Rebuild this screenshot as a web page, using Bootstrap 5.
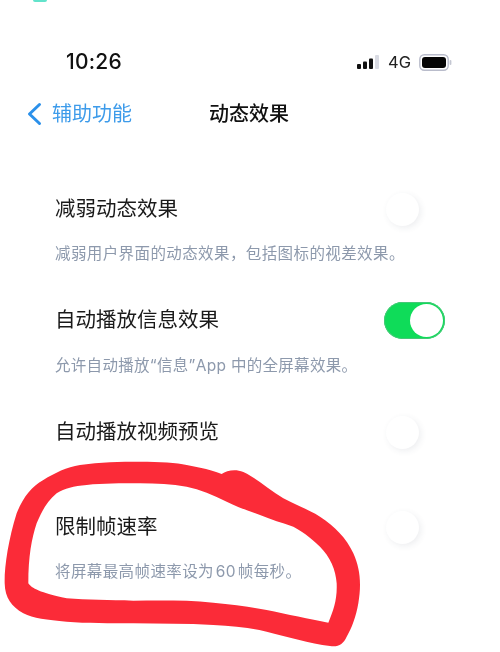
<!DOCTYPE html>
<html lang="zh">
<head>
<meta charset="utf-8">
<title>动态效果</title>
<link rel="stylesheet" href="https://cdn.jsdelivr.net/npm/bootstrap@5.3.0/dist/css/bootstrap.min.css">
<style>
html,body{height:652px;overflow:hidden;background:#fff}
body{font-family:"Inter","Noto Sans CJK SC",sans-serif;color:#111}
.phone{position:relative;width:500px;height:652px;overflow:hidden;filter:blur(.45px)}
.topdot{width:14px;height:2px;margin-left:33px;background:#62e3cb;border-radius:0 0 7px 7px}
.statusbar{height:30px;margin-top:45px;padding:0 48px 0 66px}
.clock{font-size:21px;font-weight:500;line-height:30px;letter-spacing:.2px}
.net{font-size:16.5px;line-height:20px;color:#222}
.navrow{height:40px;margin-top:17px;padding-left:26px}
.backtxt{color:#3d9bea;font-size:20px;line-height:1;margin-left:10px;width:81px;white-space:nowrap}
.navtitle{font-size:20px;font-weight:500;margin-left:76px;line-height:1;white-space:nowrap}
.setlist{padding:0 55px;margin-top:55px}
.setrow{height:40px}
.settitle{font-size:20.5px;line-height:1;color:#1a1a1a}
.setnote{font-size:15.5px;line-height:20px;color:#8d99ac;margin-top:15px;white-space:nowrap;letter-spacing:.4px}
.gap-a{margin-top:36px}
.setnote-b{margin-top:16px;letter-spacing:.3px}
.gap-b{margin-top:36px}
.gap-d{margin-top:55px}
.swit{width:61px;height:37px;border-radius:19px;flex:none;padding:2px;background:#fff}
.swit-on{background:#0fdc59;box-shadow:inset 0 0 0 1px #45c877;display:flex;justify-content:flex-end}
.knob{width:33px;height:33px;border-radius:50%;background:#fff;box-shadow:2px 2px 6px rgba(60,70,90,.09)}
.swit-on .knob{box-shadow:none}
.scribble{position:absolute;left:0;top:450px}
</style>
</head>
<body>
<div class="phone">
  <div class="topdot"></div>
  <div class="statusbar d-flex justify-content-between align-items-center">
    <div class="clock">10:26</div>
    <div class="d-flex align-items-center net">
      <svg width="24" height="16" viewBox="0 0 24 16">
        <rect x="1" y="10" width="4" height="5" rx="1" fill="#111"/>
        <rect x="7" y="7.5" width="4" height="7.5" rx="1" fill="#111"/>
        <rect x="13" y="4.5" width="4" height="10.5" rx="1" fill="#111"/>
        <rect x="19" y="1" width="4" height="14" rx="1" fill="#d9dbe3"/>
      </svg>
      <span class="ms-2">4G</span>
      <svg class="ms-2" width="33" height="17" viewBox="0 0 33 17">
        <rect x=".8" y=".8" width="28.4" height="15.4" rx="4.5" fill="#fff" stroke="#b9bccb" stroke-width="1.4"/>
        <rect x="3" y="3" width="24" height="11" rx="3" fill="#050505"/>
        <rect x="30.6" y="6" width="1.8" height="5" rx=".9" fill="#c4c7d2"/>
      </svg>
    </div>
  </div>
  <div class="navrow d-flex align-items-center">
    <svg width="16" height="24" viewBox="0 0 16 24"><path d="M13.5 2.5 3.5 12l10 9.5" fill="none" stroke="#2b90ea" stroke-width="3" stroke-linecap="round" stroke-linejoin="round"/></svg>
    <div class="backtxt">辅助功能</div>
    <div class="navtitle">动态效果</div>
  </div>
  <div class="setlist">
    <div class="setrow d-flex justify-content-between align-items-center">
      <div class="settitle">减弱动态效果</div>
      <div class="swit"><div class="knob"></div></div>
    </div>
    <div class="setnote">减弱用户界面的动态效果，包括图标的视差效果。</div>
    <div class="setrow d-flex justify-content-between align-items-center gap-a">
      <div class="settitle">自动播放信息效果</div>
      <div class="swit swit-on"><div class="knob"></div></div>
    </div>
    <div class="setnote setnote-b">允许自动播放“信息”App 中的全屏幕效果。</div>
    <div class="setrow d-flex justify-content-between align-items-center gap-b">
      <div class="settitle">自动播放视频预览</div>
      <div class="swit"><div class="knob"></div></div>
    </div>
    <div class="setrow d-flex justify-content-between align-items-center gap-d">
      <div class="settitle">限制帧速率</div>
      <div class="swit"><div class="knob"></div></div>
    </div>
    <div class="setnote">将屏幕最高帧速率设为&#8202;60&#8202;帧每秒。</div>
  </div>
  <svg class="scribble" width="500" height="202" viewBox="0 0 1500 606">
    <path fill="#fb2b38" fill-rule="evenodd" d="M665 72C680 62 705 56 730 66C770 84 810 122 850 145C890 167 930 180 960 200C1005 230 1040 265 1060 310C1080 355 1085 400 1075 460C1068 500 1055 535 1040 560C1030 582 1015 592 990 588C930 580 860 560 800 545C750 533 700 528 640 525C560 520 480 522 400 520C330 519 260 520 200 515C140 510 100 505 70 490C35 470 15 445 14 400C13 350 25 270 50 190C70 140 95 110 130 90C165 68 200 52 240 45C300 36 360 35 420 35C480 35 530 38 560 45C600 52 640 62 665 72ZM85 400C95 415 120 428 200 445C260 450 330 450 400 452C480 452 560 450 640 458C700 464 750 470 800 480C860 492 930 508 985 518C1000 480 1012 450 1010 400C1008 360 990 320 960 290C930 260 900 240 880 230C845 218 815 210 780 195C745 182 710 170 680 155C640 135 600 118 560 110C515 102 470 100 420 100C360 100 310 100 260 105C220 108 195 115 170 130C140 155 125 185 110 220C95 265 85 320 85 400Z"/>
  </svg>
</div>
<script src="https://cdn.jsdelivr.net/npm/bootstrap@5.3.0/dist/js/bootstrap.bundle.min.js"></script>
</body>
</html>
